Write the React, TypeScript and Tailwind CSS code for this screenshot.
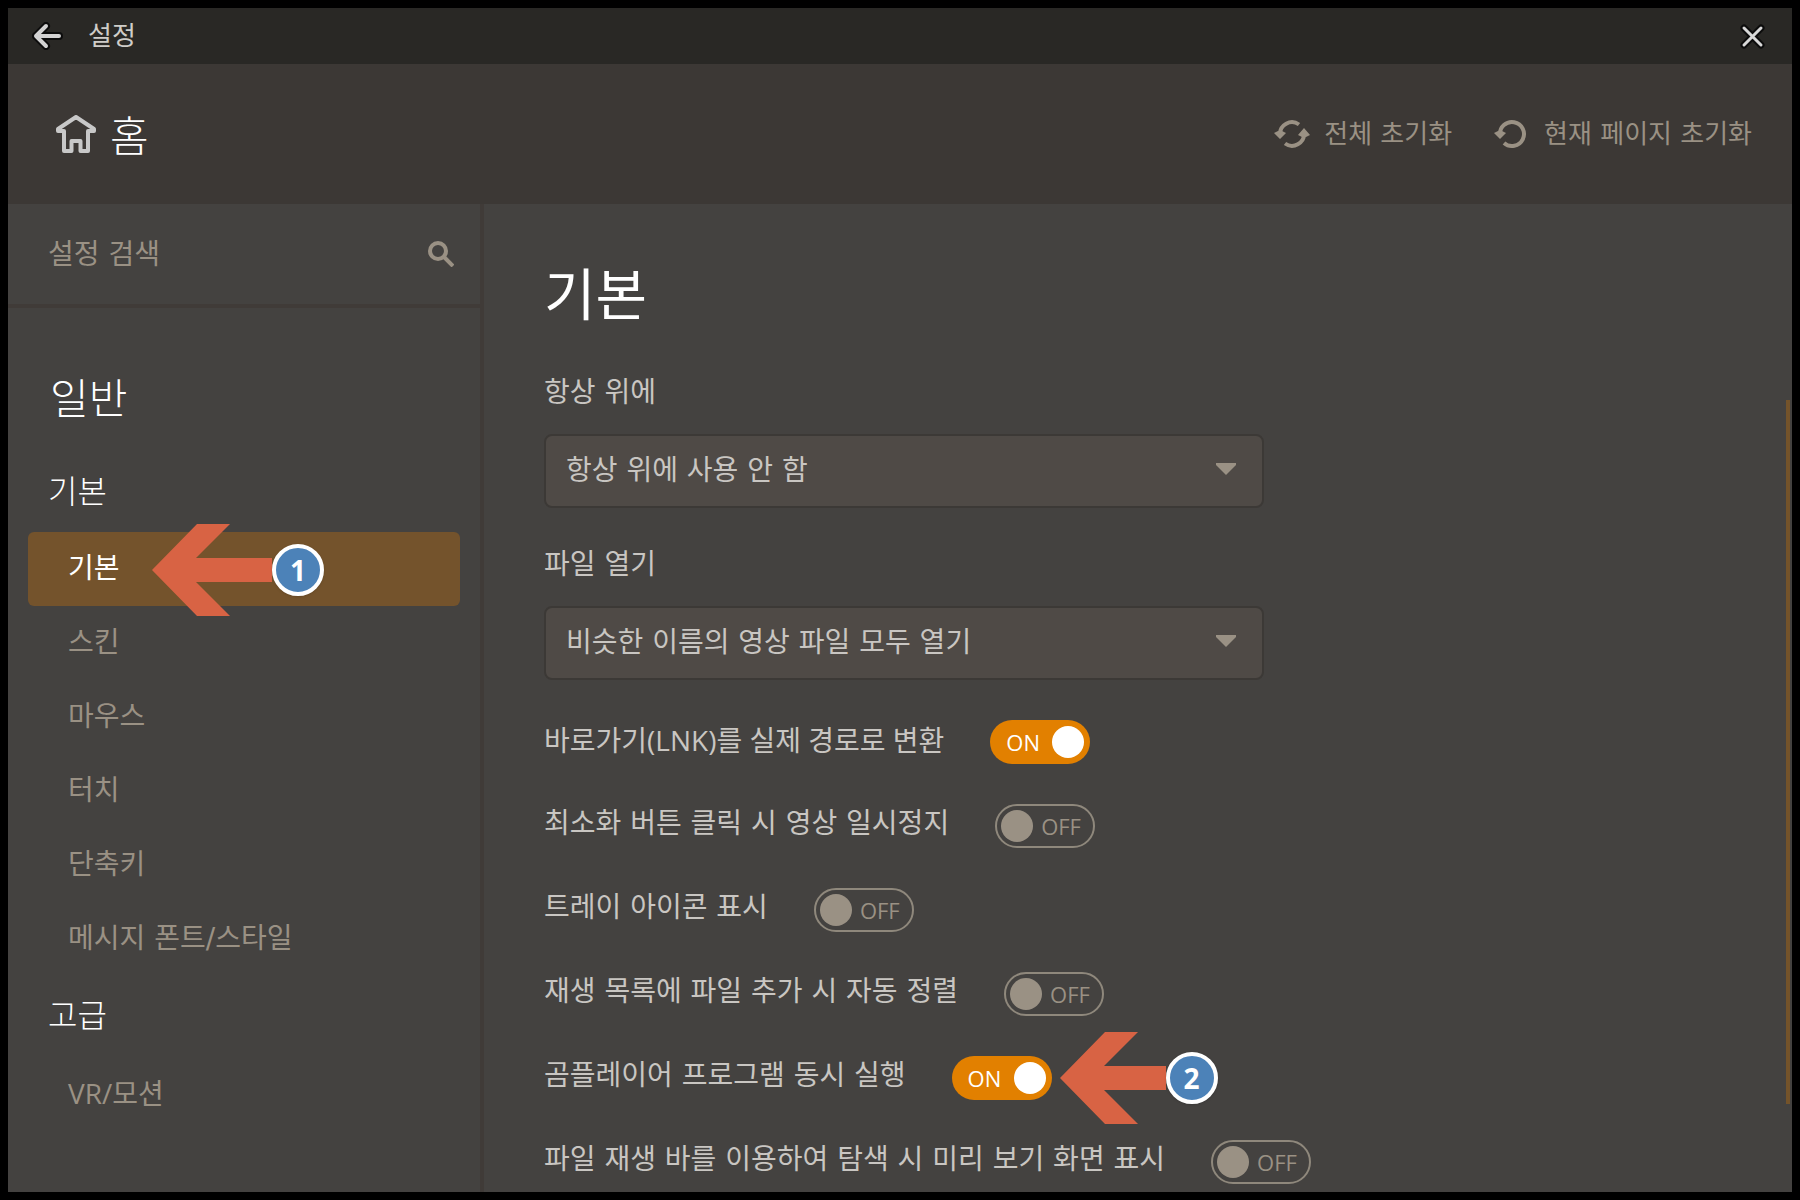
import React, { useState } from 'react';

const navSections = [
  { title: '기본', items: ['기본', '스킨', '마우스', '터치', '단축키', '메시지 폰트/스타일'] },
  { title: '고급', items: ['VR/모션'] },
];

const toggles = [
  { id: 'lnk', label: '바로가기(LNK)를 실제 경로로 변환', on: true },
  { id: 'pause', label: '최소화 버튼 클릭 시 영상 일시정지', on: false },
  { id: 'tray', label: '트레이 아이콘 표시', on: false },
  { id: 'sort', label: '재생 목록에 파일 추가 시 자동 정렬', on: false },
  { id: 'launch', label: '곰플레이어 프로그램 동시 실행', on: true, step: 2 },
  { id: 'preview', label: '파일 재생 바를 이용하여 탐색 시 미리 보기 화면 표시', on: false },
];

const BackIcon = () => (
  <svg width="32" height="28" viewBox="0 0 32 28" fill="none" strokeLinecap="round" strokeLinejoin="round">
    <path d="M14 4L4 14L14 24M4 14H27" stroke="#0c0c0c" strokeWidth="8" />
    <path d="M14 4L4 14L14 24M4 14H27" stroke="#d2d2d2" strokeWidth="4" />
  </svg>
);

const CloseIcon = () => (
  <svg width="28" height="28" viewBox="0 0 28 28" fill="none" strokeLinecap="round">
    <path d="M6 6L23 23M23 6L6 23" stroke="#0c0c0c" strokeWidth="7" />
    <path d="M6 6L23 23M23 6L6 23" stroke="#d8d8d8" strokeWidth="3" />
  </svg>
);

const HomeIcon = () => (
  <svg width="40" height="38" viewBox="0 0 40 38" fill="none" stroke="#c8c8c8" strokeWidth="4" strokeLinejoin="round">
    <path d="M20 2L2 14V16H8V36H15.5V26H24.5V36H32V16H38V14Z" />
  </svg>
);

const ResetAllIcon = () => (
  <svg width="36" height="32" viewBox="0 0 36 32" fill="none" stroke="#9a9184" strokeWidth="4">
    <path d="M6 17A12 12 0 0 1 25 6.500" />
    <path d="M30 15A12 12 0 0 1 11 25.500" />
    <path d="M0 15L4 13H8L12 15L6 21Z M24 17L28 19H32L36 17L30 10Z" fill="#9a9184" stroke="none" />
  </svg>
);

const ResetPageIcon = () => (
  <svg width="36" height="32" viewBox="0 0 36 32" fill="none" stroke="#9a9184" strokeWidth="4">
    <path d="M6 17A12 12 0 1 1 10 25" />
    <path d="M0 15L4 13H8L12 15L6 21Z" fill="#9a9184" stroke="none" />
  </svg>
);

const SearchIcon = () => (
  <svg width="26" height="26" viewBox="0 0 26 26" fill="none" stroke="#9a9184" strokeWidth="4">
    <circle cx="10" cy="10" r="8" />
    <path d="M16 16L25 25" />
  </svg>
);

const StepMarker = ({ step, length, className }: { step: number; length: number; className: string }) => (
  <div className={`absolute z-10 flex items-center pointer-events-none ${className}`}>
    <svg width={length} height="92" viewBox={`0 0 ${length} 92`} fill="#d86344">
      <path d={`M0 46L45 0H78L44 34H${length}V58H44L78 92H45Z`} />
    </svg>
    <span className="flex size-[52px] items-center justify-center rounded-full border-4 border-white bg-[#4c82b8] font-['Open_Sans'] text-[28px] leading-none font-bold text-white shadow-sm">
      {step}
    </span>
  </div>
);

const SelectField = ({ id, label, value }: { id: string; label: string; value: string }) => (
  <div className="mb-10">
    <label htmlFor={id} className="block h-[58px] text-[28px] leading-[34px] text-[#c9c6c2]">
      {label}
    </label>
    <div className="relative">
      <select
        id={id}
        className="h-[74px] w-full appearance-none rounded-lg border-2 border-[#3c3936] bg-[#4f4a46] px-5 text-[28px] text-[#c9c6c2] outline-none"
      >
        <option>{value}</option>
      </select>
      <svg className="pointer-events-none absolute top-7 right-7" width="20" height="14" viewBox="0 0 20 14" fill="#9a9184">
        <path d="M0 1H20V3L10 13L0 3Z" />
      </svg>
    </div>
  </div>
);

const Toggle = ({ id, label, on, step }: { id: string; label: string; on: boolean; step?: number }) => {
  const [checked, setChecked] = useState(on);

  return (
    <div className="flex">
      <label htmlFor={id} className="relative flex h-11 items-center gap-[46px] text-[28px] leading-10 whitespace-nowrap text-[#c9c6c2]">
        <span className={`pb-1 ${label.includes('LNK') ? "font-['Open_Sans','Noto_Sans_CJK_KR',sans-serif]" : ''}`}>
          {label}
        </span>
        <input
          id={id}
          type="checkbox"
          className="sr-only"
          checked={checked}
          onChange={(e) => setChecked(e.target.checked)}
        />
        {checked ? (
          <span className="flex h-11 w-[100px] items-center justify-between rounded-full bg-[#e28000] pr-[6px] pl-4 font-['Open_Sans'] text-[22px] text-white">
            ON
            <span className="size-8 rounded-full bg-white" />
          </span>
        ) : (
          <span className="flex h-11 w-[100px] items-center gap-2 rounded-full border-2 border-[#8f887c] pl-1 font-['Open_Sans'] text-[22px] text-[#9a9184]">
            <span className="size-8 rounded-full bg-[#9a9184]" />
            OFF
          </span>
        )}
        {step && <StepMarker step={step} length={106} className="-top-6 left-full ml-2" />}
      </label>
    </div>
  );
};

const App: React.FC = () => {
  const [active, setActive] = useState('기본');

  return (
    <div className="flex min-h-screen flex-col border-8 border-black bg-[#444240] font-['DejaVu_Sans','Noto_Sans_CJK_KR',sans-serif]">
      <header className="flex h-14 items-center bg-[#292825] pr-[26px] pl-6">
        <button type="button" aria-label="뒤로">
          <BackIcon />
        </button>
        <h1 className="ml-6 text-[26px] leading-9 text-[#cfcdc9]">설정</h1>
        <button type="button" aria-label="닫기" className="ml-auto">
          <CloseIcon />
        </button>
      </header>

      <div className="flex h-[140px] items-center justify-between bg-[#3c3835] pr-10 pl-12">
        <a href="#home" className="flex items-center gap-[14px] text-[42px] leading-none font-light text-white">
          <HomeIcon />
          <span className="pt-2">홈</span>
        </a>
        <div className="flex gap-[42px] text-[26px] leading-9 text-[#9a9184]">
          <button type="button" className="flex items-center gap-[14px]">
            <ResetAllIcon />
            전체 초기화
          </button>
          <button type="button" className="flex items-center gap-[14px]">
            <ResetPageIcon />
            현재 페이지 초기화
          </button>
        </div>
      </div>

      <div className="flex flex-1">
        <aside className="w-[476px] shrink-0 border-r-4 border-[#403b38]">
          <div className="flex h-[104px] items-center border-b-4 border-[#403b38] pr-[26px] pl-10">
            <input
              type="search"
              aria-label="설정 검색"
              placeholder="설정 검색"
              className="min-w-0 flex-1 bg-transparent pt-[2px] text-[28px] text-white outline-none placeholder:text-[#9a9184]"
            />
            <button type="button" aria-label="검색">
              <SearchIcon />
            </button>
          </div>

          <nav className="px-5 pt-[66px]">
            <h2 className="h-[78px] pl-[22px] text-[42px] leading-[52px] font-light text-white">일반</h2>
            {navSections.map((section) => (
              <div key={section.title}>
                <h3 className="flex h-20 items-center pl-5 text-[32px] font-light text-white">{section.title}</h3>
                {section.items.map((item) => (
                  <a
                    key={item}
                    href={`#${item}`}
                    onClick={() => setActive(item)}
                    className={`relative flex h-[74px] items-center rounded-md pl-10 text-[28px] ${
                      item.startsWith('VR') ? "font-['Open_Sans','Noto_Sans_CJK_KR',sans-serif]" : ''
                    } ${active === item ? 'bg-[#74532c] text-white' : 'text-[#9a9184]'}`}
                  >
                    {item}
                    {item === '기본' && <StepMarker step={1} length={120} className="-top-2 left-[124px]" />}
                  </a>
                ))}
              </div>
            ))}
          </nav>
        </aside>

        <main className="relative flex-1 px-[60px] pt-[58px]">
          <h2 className="h-[114px] text-[56px] leading-[68px] text-white">기본</h2>
          <div className="max-w-[720px]">
            <SelectField id="always-on-top" label="항상 위에" value="항상 위에 사용 안 함" />
            <SelectField id="open-file" label="파일 열기" value="비슷한 이름의 영상 파일 모두 열기" />
          </div>
          <div className="flex flex-col gap-10">
            {toggles.map((item) => (
              <Toggle key={item.id} {...item} />
            ))}
          </div>
          <div className="absolute top-[196px] right-[2px] bottom-[88px] w-1 bg-[#74532a]" />
        </main>
      </div>
    </div>
  );
};

export default App;
